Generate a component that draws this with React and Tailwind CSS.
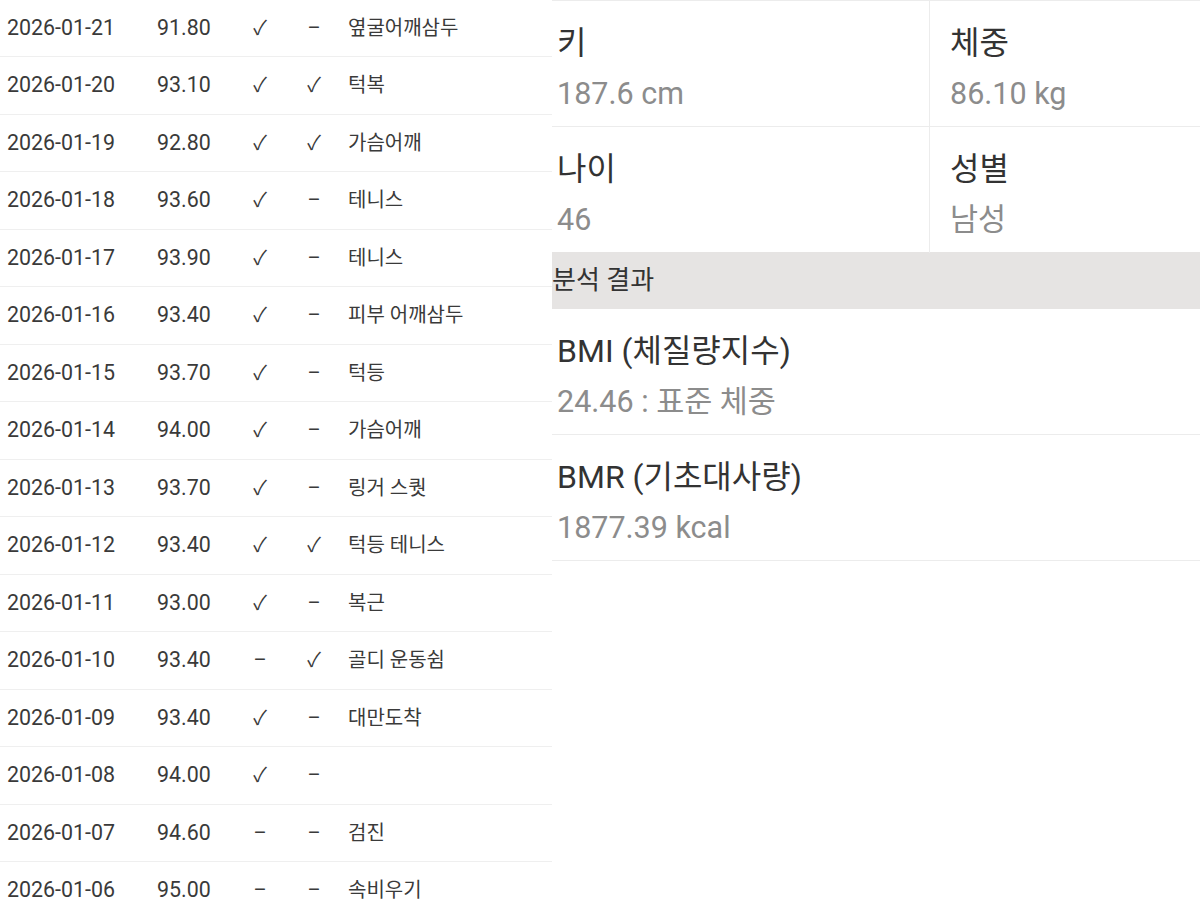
import React from "react";

const rows = [
  ["2026-01-21", "91.80", "✓", "–", "옆굴어깨삼두"],
  ["2026-01-20", "93.10", "✓", "✓", "턱복"],
  ["2026-01-19", "92.80", "✓", "✓", "가슴어깨"],
  ["2026-01-18", "93.60", "✓", "–", "테니스"],
  ["2026-01-17", "93.90", "✓", "–", "테니스"],
  ["2026-01-16", "93.40", "✓", "–", "피부 어깨삼두"],
  ["2026-01-15", "93.70", "✓", "–", "턱등"],
  ["2026-01-14", "94.00", "✓", "–", "가슴어깨"],
  ["2026-01-13", "93.70", "✓", "–", "링거 스퀏"],
  ["2026-01-12", "93.40", "✓", "✓", "턱등 테니스"],
  ["2026-01-11", "93.00", "✓", "–", "복근"],
  ["2026-01-10", "93.40", "–", "✓", "골디 운동쉼"],
  ["2026-01-09", "93.40", "✓", "–", "대만도착"],
  ["2026-01-08", "94.00", "✓", "–", ""],
  ["2026-01-07", "94.60", "–", "–", "검진"],
  ["2026-01-06", "95.00", "–", "–", "속비우기"],
];

function Cell({ label, value, className = "" }) {
  return (
    <div className={"h-[126px] border-b border-[#ececec] pt-[22px] " + className}>
      <div className="text-[32px] leading-[40px] text-[#333]">{label}</div>
      <div className="mt-[11px] text-[30.5px] leading-[40px] text-[#8c8c8c]">{value}</div>
    </div>
  );
}

export default function App() {
  return (
    <div
      className="flex w-[1200px] h-[904px] overflow-hidden bg-white"
      style={{ fontFamily: 'Roboto, "Noto Sans CJK KR", sans-serif' }}
    >
      <div className="w-[552px] shrink-0 -mt-[0.5px]">
        {rows.map((r, i) => (
          <div
            key={i}
            className="flex items-center h-[57.5px] border-b border-[#efefef] text-[21.4px] text-[#3a3a3a]"
          >
            <div className="w-[157px] pl-[7px]">{r[0]}</div>
            <div className="w-[88px]">{r[1]}</div>
            <div className="w-[30px] text-center text-[20px]">{r[2]}</div>
            <div className="w-[21px]" />
            <div className="w-[36px] text-center text-[20px]">{r[3]}</div>
            <div className="pl-[16px] text-[20px]">{r[4]}</div>
          </div>
        ))}
      </div>
      <div className="flex-1 border-t border-[#ececec]">
        <div className="grid grid-cols-[378px_1fr]">
          <Cell label="키" value="187.6 cm" className="pl-[5px] border-r border-[#ececec]" />
          <Cell label="체중" value="86.10 kg" className="pl-[20px]" />
          <Cell label="나이" value="46" className="pl-[5px] border-r border-[#ececec] border-b-0" />
          <Cell label="성별" value="남성" className="pl-[20px] border-b-0" />
        </div>
        <div className="h-[57px] bg-[#e6e4e3] flex items-center text-[26px] text-[#333] -mt-px">
          분석 결과
        </div>
        <Cell label="BMI (체질량지수)" value="24.46 : 표준 체중" className="pl-[5px] h-[125px]" />
        <Cell label="BMR (기초대사량)" value="1877.39 kcal" className="pl-[5px] h-[125px]" />
      </div>
    </div>
  );
}
